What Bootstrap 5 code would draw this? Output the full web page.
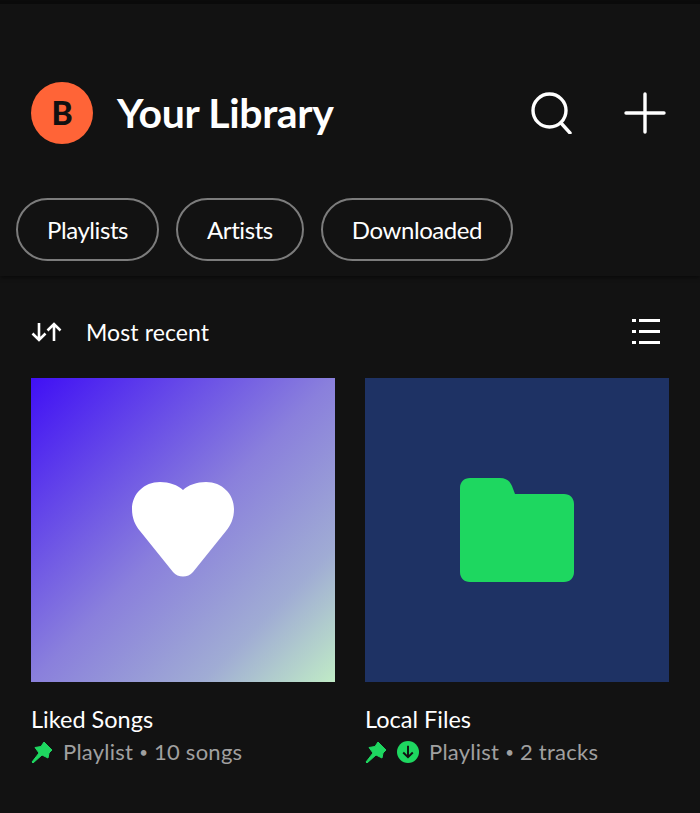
<!DOCTYPE html>
<html lang="en">
<head>
    <meta charset="UTF-8">
    <meta name="viewport" content="width=device-width, initial-scale=1">
    <title>Your Library</title>
    <link href="https://cdn.jsdelivr.net/npm/bootstrap@5.3.0/dist/css/bootstrap.min.css" rel="stylesheet">
    <style>
        body {
            background-color: #121212;
            color: #ffffff;
            font-family: Lato, "Liberation Sans", sans-serif;
            height: 813px;
            overflow: hidden;
        }
        .status-strip {
            height: 4px;
            background-color: #0b0b0b;
        }
        .lib-header {
            height: 272px;
            padding: 78px 34px 0 16px;
            box-shadow: 0 2px 4px rgba(0, 0, 0, .45);
        }
        .title-row {
            height: 62px;
            margin-bottom: 54px;
            padding-left: 15px;
        }
        .avatar {
            width: 62px;
            height: 62px;
            background-color: #ff6437;
            color: #111111;
            font-size: 32px;
            font-weight: 900;
        }
        .lib-title {
            font-size: 41px;
            font-weight: 700;
            letter-spacing: -.35px;
            margin: 0 0 0 24px;
        }
        .head-icons {
            gap: 51px;
        }
        .chip {
            height: 63px;
            border: 2px solid #7c7c7c;
            border-radius: 32px;
            color: #ffffff;
            background: transparent;
            font-size: 24px;
            letter-spacing: -.42px;
            line-height: 1;
            padding: 0 29px;
        }
        .chip:hover {
            color: #ffffff;
        }
        .chip-row {
            gap: 17px;
        }
        .sort-row {
            height: 50px;
            margin-top: 31px;
            padding: 0 39px 0 31px;
        }
        .sort-label {
            font-size: 23px;
            letter-spacing: .1px;
            margin-left: 23px;
        }
        .tile-grid {
            display: grid;
            grid-template-columns: 304px 304px;
            column-gap: 30px;
            padding-left: 31px;
            margin-top: 21px;
        }
        .tile-art {
            height: 304px;
        }
        .art-liked {
            background: linear-gradient(135deg, #4010f5 0%, #8a80dc 50%, #a0acd4 78%, #c0ebc6 100%);
        }
        .art-local {
            background-color: #1e3264;
        }
        .tile-name {
            font-size: 23.5px;
            line-height: 28px;
            margin-top: 23px;
        }
        .tile-meta {
            color: #a0a0a0;
            font-size: 22px;
            letter-spacing: .25px;
            line-height: 28px;
            margin-top: 5px;
            gap: 10px;
        }
        .meta-dot {
            font-size: 15px;
            vertical-align: 2px;
        }
    </style>
</head>
<body>
    <div class="status-strip"></div>

    <div class="lib-header">
        <div class="title-row d-flex align-items-center">
            <div class="avatar rounded-circle d-flex align-items-center justify-content-center">B</div>
            <h1 class="lib-title">Your Library</h1>
            <div class="head-icons d-flex align-items-center ms-auto">
                <svg width="42" height="42" viewBox="0 0 42 42" fill="none" stroke="#fff" stroke-width="3.4" stroke-linecap="round"><circle cx="18.5" cy="18.5" r="16.5"/><line x1="30" y1="31" x2="39" y2="41"/></svg>
                <svg width="42" height="42" viewBox="0 0 42 42" fill="none" stroke="#fff" stroke-width="3.4" stroke-linecap="round"><line x1="21" y1="2" x2="21" y2="40"/><line x1="2" y1="21" x2="40" y2="21"/></svg>
            </div>
        </div>
        <div class="chip-row d-flex">
            <button class="btn chip">Playlists</button>
            <button class="btn chip">Artists</button>
            <button class="btn chip">Downloaded</button>
        </div>
    </div>

    <div class="sort-row d-flex align-items-center">
        <svg width="32" height="24" viewBox="0 0 32 24" fill="none" stroke="#fff" stroke-width="2.6"><path d="M8 3v17M1.5 13.5 8 20l6.500-6.500"/><path d="M23 21V4M16.500 10.500 23 4l6.500 6.500"/></svg>
        <span class="sort-label">Most recent</span>
        <svg class="ms-auto" width="30" height="28" viewBox="0 0 30 28" fill="#fff"><rect x="1" y="1" width="4" height="3"/><rect x="8" y="1" width="21" height="3"/><rect x="1" y="12" width="4" height="3"/><rect x="8" y="12" width="21" height="3"/><rect x="1" y="23" width="4" height="3"/><rect x="8" y="23" width="21" height="3"/></svg>
    </div>

    <div class="tile-grid">
        <div>
            <div class="tile-art art-liked d-flex align-items-center justify-content-center">
                <svg width="102" height="96" viewBox="0 0 102 96" fill="#fff"><path d="M51 8C46 3 37 0 28 0 12 0 0 12 0 27c0 9 3 16 8 22l33 41c5 6 15 6 20 0l33-41c5-6 8-13 8-22C102 12 90 0 74 0 65 0 56 3 51 8Z"/></svg>
            </div>
            <div class="tile-name">Liked Songs</div>
            <div class="tile-meta d-flex align-items-center">
                <svg width="22" height="22" viewBox="0 0 22 22" fill="#1ed760" stroke="#1ed760" stroke-linejoin="round"><polygon points="13,1 21,9 18,12 17,17 11,14 2,22 1,21 8,12 4,6.500 10,5.500"/></svg>
                <span>Playlist <span class="meta-dot">•</span> 10 songs</span>
            </div>
        </div>
        <div>
            <div class="tile-art art-local d-flex align-items-center justify-content-center">
                <svg width="114" height="104" viewBox="0 0 114 104" fill="#1ed760"><path d="M10 0h30c6 0 10 3 12 8l3 8h49c6 0 10 4 10 10v68c0 6-4 10-10 10H10c-6 0-10-4-10-10V10C0 4 4 0 10 0Z"/></svg>
            </div>
            <div class="tile-name">Local Files</div>
            <div class="tile-meta d-flex align-items-center">
                <svg width="22" height="22" viewBox="0 0 22 22" fill="#1ed760" stroke="#1ed760" stroke-linejoin="round"><polygon points="13,1 21,9 18,12 17,17 11,14 2,22 1,21 8,12 4,6.500 10,5.500"/></svg>
                <svg width="22" height="22" viewBox="0 0 23 23"><circle cx="11.500" cy="11.500" r="11.500" fill="#1ed760"/><path d="M11.500 5v12M6.500 12l5 5 5-5" fill="none" stroke="#111" stroke-width="2"/></svg>
                <span>Playlist <span class="meta-dot">•</span> 2 tracks</span>
            </div>
        </div>
    </div>

    <script src="https://cdn.jsdelivr.net/npm/bootstrap@5.3.0/dist/js/bootstrap.bundle.min.js"></script>
</body>
</html>
